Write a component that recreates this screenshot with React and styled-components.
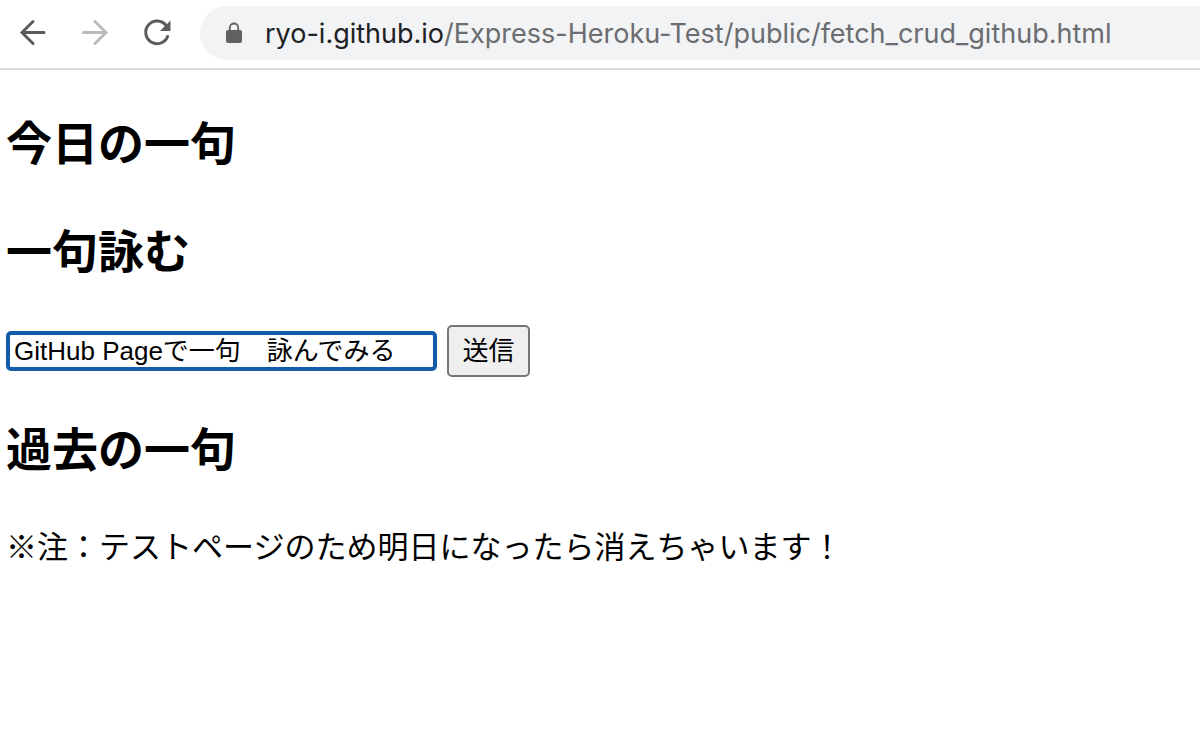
import React, { useState } from 'react';
import styled, { createGlobalStyle } from 'styled-components';

const GlobalStyle = createGlobalStyle`
  * { box-sizing: border-box; }
  body {
    margin: 0;
    background: #fff;
    color: #000;
    font-family: "Liberation Sans", "Noto Sans CJK JP", sans-serif;
  }
`;

const Toolbar = styled.header`
  display: flex;
  align-items: center;
  height: 70px;
  padding: 0 0 2px 16px;
  border-bottom: 2px solid #d8d9db;
`;

const NavButtons = styled.nav`
  display: flex;
  flex: none;
  gap: 28px;
`;

const IconButton = styled.button`
  display: flex;
  padding: 0;
  border: 0;
  background: none;
  color: ${({ $muted }) => ($muted ? '#babbbd' : '#5a5c60')};

  svg {
    width: 34px;
    height: 34px;
    fill: none;
    stroke: currentColor;
    stroke-width: 3;
    stroke-linecap: round;
  }
`;

const AddressBar = styled.div`
  display: flex;
  flex: 1;
  align-items: center;
  gap: 22px;
  min-width: 0;
  height: 54px;
  margin-left: 26px;
  padding-left: 25px;
  border-radius: 27px 0 0 27px;
  background: #f1f3f4;
`;

const LockIcon = styled.svg`
  flex: none;
  width: 18px;
  height: 22px;
  color: #5f6163;
`;

const Address = styled.a`
  overflow: hidden;
  padding-top: 2px;
  color: #6b6d70;
  font: 27px/36px Inter, sans-serif;
  text-decoration: none;
  white-space: nowrap;
`;

const Host = styled.span`
  color: #202124;
`;

const Content = styled.main`
  padding: 39px 6px;
`;

const Heading = styled.h2`
  margin: 0 0 38px;
  font-size: 46px;
  line-height: 70px;
`;

const VerseForm = styled.form`
  display: flex;
  align-items: center;
  gap: 10px;
  margin-bottom: 38px;
`;

const VerseInput = styled.input`
  width: 431px;
  height: 40px;
  padding: 0 8px 6px;
  border: 0;
  border-radius: 5px;
  outline: 4px solid #135cab;
  outline-offset: -4px;
  background: #fff;
  color: #000;
  font: 26px/32px "Liberation Sans", "Noto Sans CJK JP", sans-serif;
`;

const SubmitButton = styled.button`
  width: 83px;
  height: 52px;
  padding: 0;
  border: 2px solid #767676;
  border-radius: 5px;
  background: #efefef;
  color: #000;
  font: 26px/32px "Liberation Sans", "Noto Sans CJK JP", sans-serif;
`;

const Note = styled.p`
  margin: 0;
  font-size: 31px;
  line-height: 50px;
`;

export default function App() {
  const [verse, setVerse] = useState('GitHub Pageで一句　詠んでみる');
  return (
    <>
      <GlobalStyle />
      <Toolbar>
        <NavButtons aria-label="ナビゲーション">
          <IconButton type="button" aria-label="戻る">
            <svg viewBox="0 0 34 34"><path d="M28 16.500H6M17 5.500L6 16.500L17 27.500" /></svg>
          </IconButton>
          <IconButton type="button" aria-label="進む" $muted>
            <svg viewBox="0 0 34 34"><path d="M5.500 16.500H27.500M17 5.500L28 16.500L17 27.500" /></svg>
          </IconButton>
          <IconButton type="button" aria-label="再読み込み">
            <svg viewBox="0 0 34 34">
              <path d="M26 9.500A11.300 11.300 0 1 0 27.600 20.500" />
              <path d="M30.500 4.500V15H20z" fill="currentColor" stroke="none" />
            </svg>
          </IconButton>
        </NavButtons>
        <AddressBar>
          <LockIcon viewBox="0 0 18 22" aria-hidden="true">
            <rect x="1" y="8" width="16" height="13" rx="2" fill="currentColor" />
            <path d="M4.800 8.500V5.700a4.200 4.200 0 0 1 8.400 0V8.500" fill="none" stroke="currentColor" strokeWidth="1.800" />
          </LockIcon>
          <Address href="#"><Host>ryo-i.github.io</Host>/Express-Heroku-Test/public/fetch_crud_github.html</Address>
        </AddressBar>
      </Toolbar>
      <Content>
        <Heading>今日の一句</Heading>
        <Heading>一句詠む</Heading>
        <VerseForm onSubmit={(event) => event.preventDefault()}>
          <VerseInput aria-label="一句" value={verse} onChange={(event) => setVerse(event.target.value)} />
          <SubmitButton type="submit">送信</SubmitButton>
        </VerseForm>
        <Heading>過去の一句</Heading>
        <Note>※注：テストページのため明日になったら消えちゃいます！</Note>
      </Content>
    </>
  );
}
